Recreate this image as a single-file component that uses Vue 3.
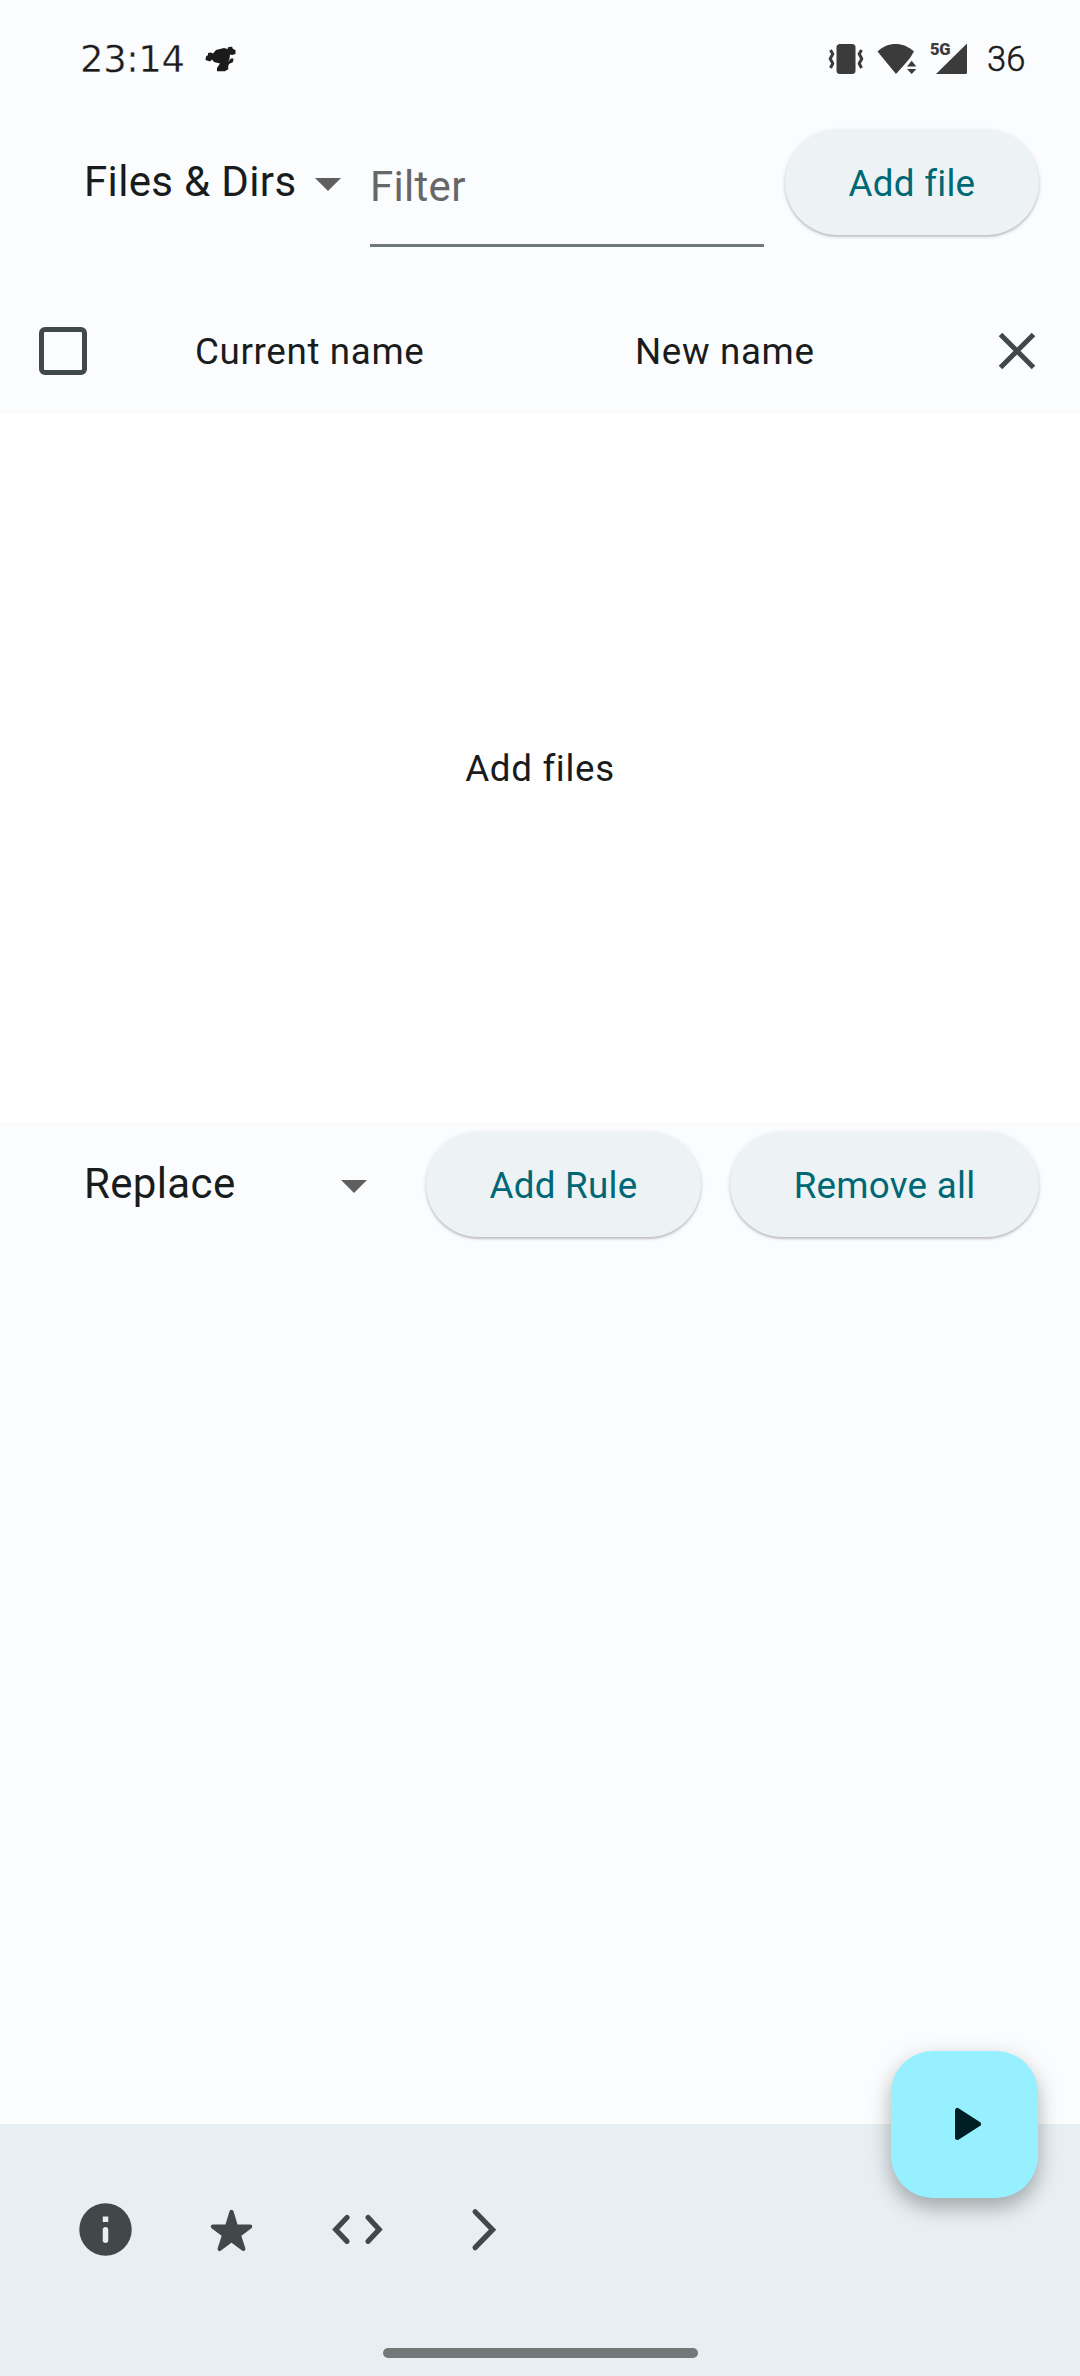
<script setup>
import { ref } from 'vue'

const scope = ref('Files & Dirs')
const rule = ref('Replace')
</script>

<template>
  <div class="screen">
    <header class="status">
      <span class="clock">23:14</span>
      <svg class="notif" width="32" height="28" viewBox="0 0 32 28">
        <path fill="#1b1b1b" d="M.5 14 1 10.500 3 9 3 7 6 6.500 8 7.500 11 4 19 2 22.500 3 23.500 1 27 .8 28 3 30.500 4 30.500 8 27 9 25 8.500 24.500 13 23 16 26 12.500 28.500 12.500 28 16 24 18 23 21 23.500 23 20 25.300 12 25.300 12 22 15 17.500 9 16 7 13.500 5 15.500Z" />
      </svg>
      <div class="tray">
        <svg width="36" height="32" viewBox="0 0 36 32">
          <rect x="8.500" y="1" width="19" height="30" rx="3.500" fill="#3b3b3b" />
          <path d="M2.500 7 4.800 11 2.200 15.800 4.800 20.500 2.500 25M33.500 7 31.200 11 33.800 15.800 31.200 20.500 33.500 25" fill="none" stroke="#3b3b3b" stroke-width="3" stroke-linejoin="round" />
        </svg>
        <svg class="wifi" width="40" height="32" viewBox="0 0 40 32">
          <path d="M.5 8.500C11-1.400 26-1.400 37 8.500L33 15 27.500 21.500 19 31Z" fill="#3b3b3b" />
          <path d="M30 23.500 34.700 17.800 39.300 23.500ZM30 26 34.700 31 39.300 26Z" fill="#3b3b3b" />
        </svg>
        <span class="net">5G</span>
        <svg class="signal" width="32" height="32" viewBox="0 0 32 32">
          <path d="M1 31 32 .5V29.500Q32 31 30.500 31Z" fill="#3b3b3b" />
        </svg>
        <span class="battery">36</span>
      </div>
    </header>

    <section class="toolbar">
      <div class="select scope">
        <span>{{ scope }}</span>
        <svg width="26" height="13" viewBox="0 0 26 13"><path d="M0 0H26L13 13Z" fill="#5f5f60" /></svg>
      </div>
      <div class="field">Filter</div>
      <button class="btn add-file">Add file</button>
    </section>

    <section class="head">
      <span class="check"></span>
      <span class="col current">Current name</span>
      <span class="col new">New name</span>
      <svg width="38" height="38" viewBox="0 0 38 38">
        <path d="M2.500 2.500 35.500 35.500M35.500 2.500 2.500 35.500" stroke="#40484a" stroke-width="5" />
      </svg>
    </section>

    <main class="files">Add files</main>

    <section class="rules">
      <div class="select rule">
        <span>{{ rule }}</span>
        <svg width="26" height="13" viewBox="0 0 26 13"><path d="M0 0H26L13 13Z" fill="#5f5f60" /></svg>
      </div>
      <button class="btn add-rule">Add Rule</button>
      <button class="btn remove">Remove all</button>
    </section>

    <footer class="bottom">
      <nav class="actions">
        <svg viewBox="0 0 24 24">
          <path fill-rule="evenodd" d="M12 2a10 10 0 1 0 0 20 10 10 0 0 0 0-20ZM10.950 7H13.050V9.100H10.950ZM12 11.050a1.050 1.050 0 0 1 1.050 1.050v4a1.050 1.050 0 0 1-2.100 0v-4A1.050 1.050 0 0 1 12 11.050Z" />
        </svg>
        <svg viewBox="0 0 24 24">
          <path stroke="#40484a" stroke-width="1.600" stroke-linejoin="round" d="M12 5.300 13.700 10.900H19.100L14.800 14.100 16.500 19.400 12 16 7.500 19.400 9.200 14.100 4.900 10.900H10.300Z" />
        </svg>
        <svg viewBox="0 0 24 24">
          <path class="line" d="M8 7.400 3.700 12 8 16.500M16.050 7.400 20.250 12 16.050 16.500" />
        </svg>
        <svg viewBox="0 0 24 24">
          <path class="line" d="M8.800 5.250 15.450 12.070 8.800 18.900" />
        </svg>
      </nav>
      <button class="fab">
        <svg width="28" height="34" viewBox="0 0 28 34">
          <path d="M3.500 3.500V30.500L24.500 17Z" fill="#001f24" stroke="#001f24" stroke-width="5" stroke-linejoin="round" />
        </svg>
      </button>
      <div class="pill"></div>
    </footer>
  </div>
</template>

<style>
body {
  margin: 0;
  background: #fbfcfe;
}
</style>

<style scoped>
.screen {
  display: flex;
  flex-direction: column;
  width: 1080px;
  height: 2376px;
  overflow: hidden;
  background: #fbfcfe;
  color: #191c1d;
  font-family: Roboto, "Noto Sans", sans-serif;
  font-size: 36.75px;
  letter-spacing: .65px;
}
.screen svg {
  display: block;
  flex: none;
}
.status {
  display: flex;
  align-items: center;
  box-sizing: border-box;
  height: 118px;
  padding: 0 55px 0 80px;
}
.clock {
  width: 125px;
  margin-top: 1px;
  font-family: "DejaVu Sans", sans-serif;
  font-size: 37px;
  letter-spacing: -.4px;
  color: #1b1b1b;
  -webkit-text-stroke: .4px #fbfcfe;
}
.notif {
  margin-bottom: -2px;
}
.tray {
  display: flex;
  align-items: center;
  margin-left: auto;
}
.wifi {
  margin-left: 13px;
}
.net {
  align-self: flex-start;
  margin: 1px -17px 0 13px;
  width: 22px;
  font-size: 16.5px;
  line-height: 20px;
  font-weight: 900;
  letter-spacing: -.3px;
  color: #3b3b3b;
}
.battery {
  width: 38px;
  margin-left: 20px;
  font-size: 34.5px;
  font-weight: 300;
  letter-spacing: 0;
  color: #1b1b1b;
  -webkit-text-stroke: .5px #1b1b1b;
}
.toolbar {
  display: flex;
  align-items: flex-start;
  height: 172px;
  padding-top: 12px;
  box-sizing: border-box;
}
.select {
  display: flex;
  align-items: center;
  justify-content: space-between;
  box-sizing: border-box;
  height: 103px;
  font-size: 42px;
  letter-spacing: .35px;
}
.select svg {
  margin-top: 6px;
}
.scope {
  width: 341px;
  padding-left: 84px;
}
.field {
  box-sizing: border-box;
  width: 394px;
  height: 117px;
  margin-left: 29px;
  border-bottom: 3px solid #6f797a;
  color: #666768;
  font-size: 42px;
  letter-spacing: .3px;
  line-height: 113px;
}
.btn {
  height: 105px;
  padding: 2px 0 0;
  border: 0;
  border-radius: 53px;
  background: #edf3f5;
  box-shadow: 0 2px 2px rgba(0, 0, 0, .17), 0 1px 5px rgba(0, 0, 0, .12);
  color: #006874;
  font: inherit;
  letter-spacing: .26px;
}
.add-file {
  width: 254px;
  margin-left: 21px;
}
.head {
  display: flex;
  align-items: center;
  box-sizing: border-box;
  height: 124px;
  padding-left: 39px;
  padding-bottom: 2px;
}
.check {
  box-sizing: border-box;
  width: 48px;
  height: 48px;
  border: 5px solid #40484a;
  border-radius: 6px;
}
.current {
  width: 440px;
  margin-left: 108px;
}
.new {
  width: 363px;
}
.files {
  display: flex;
  align-items: center;
  justify-content: center;
  height: 708px;
  background: #fff;
}
.rules {
  display: flex;
  flex: 1;
  align-items: flex-start;
  padding-top: 10px;
}
.rule {
  width: 367px;
  padding-left: 84px;
}
.add-rule {
  width: 275px;
  margin-left: 59px;
}
.remove {
  width: 309px;
  margin-left: 29px;
}
.bottom {
  position: relative;
  display: flex;
  flex-direction: column;
  align-items: center;
  justify-content: space-between;
  box-sizing: border-box;
  height: 252px;
  padding: 74px 0 18px;
  background: #e7eff2;
}
.actions {
  display: flex;
  gap: 63px;
  align-self: flex-start;
  padding-left: 73.500px;
}
.actions svg {
  width: 63px;
  height: 63px;
  fill: #40484a;
}
.actions .line {
  fill: none;
  stroke: #40484a;
  stroke-width: 2;
  stroke-linecap: round;
}
.fab {
  position: absolute;
  top: -73.500px;
  right: 42px;
  display: flex;
  align-items: center;
  justify-content: center;
  width: 147px;
  height: 147px;
  padding: 0 0 0 6px;
  border: 0;
  border-radius: 42px;
  background: #97f0ff;
  box-shadow: 0 10px 18px rgba(0, 0, 0, .22), 0 6px 30px rgba(0, 0, 0, .11);
}
.pill {
  width: 315px;
  height: 10px;
  border-radius: 5px;
  background: #737979;
}
</style>
